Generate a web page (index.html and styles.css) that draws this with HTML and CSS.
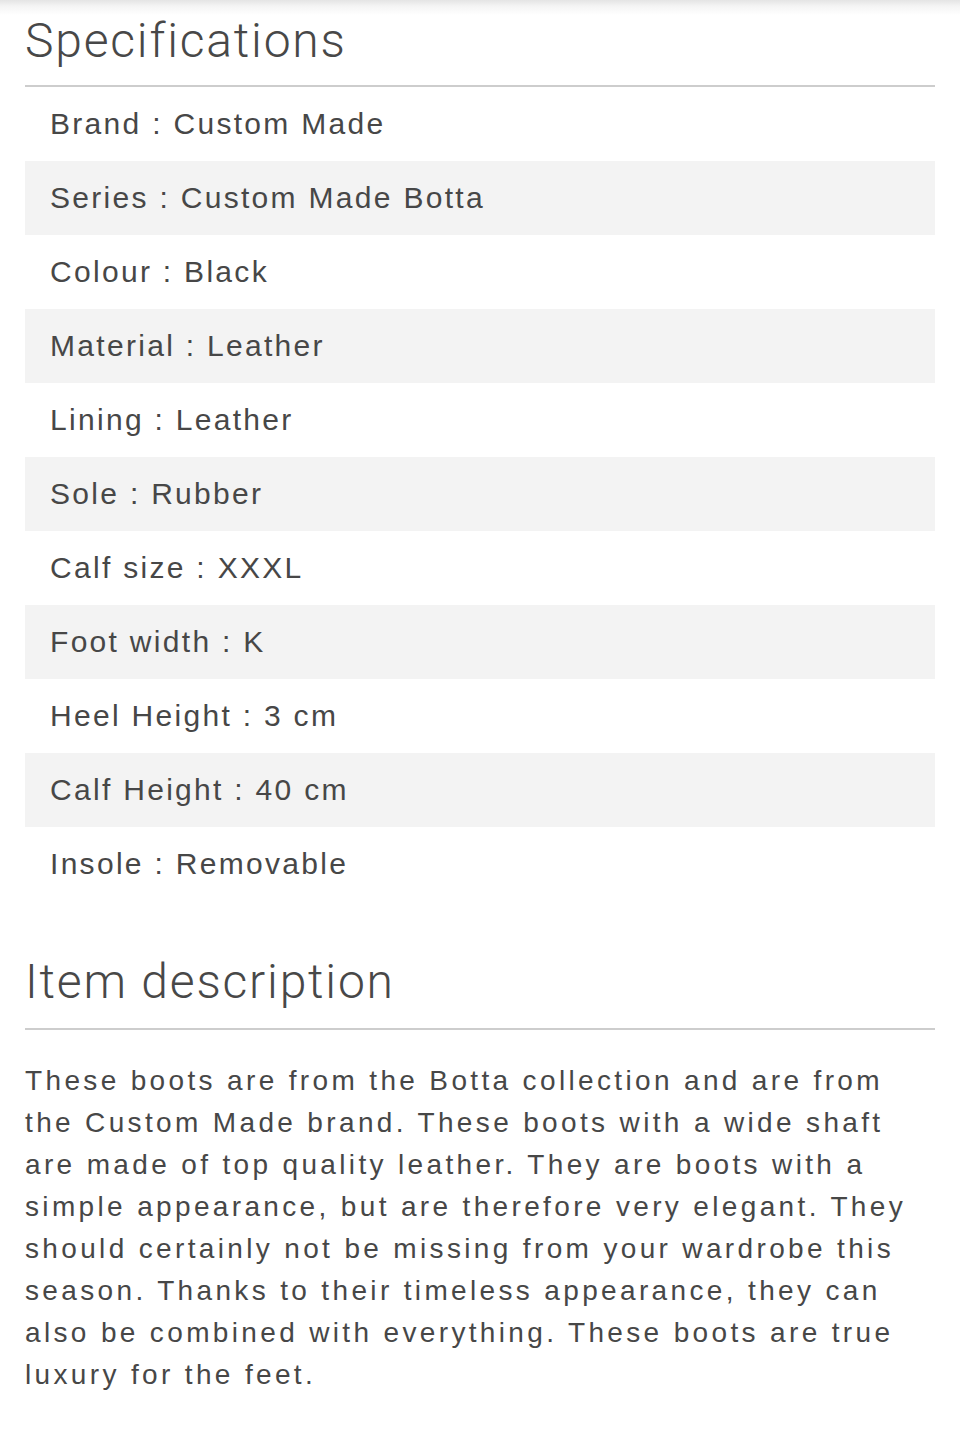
FILE: index.html
```html
<!DOCTYPE html>
<html lang="en">
<head>
<meta charset="utf-8">
<title>Specifications</title>
<link rel="stylesheet" href="styles.css">
</head>
<body>
<main class="page">
  <section class="specs">
    <h2 class="section-title">Specifications</h2>
    <ul class="spec-list">
      <li class="spec-row">Brand : Custom Made</li>
      <li class="spec-row">Series : Custom Made Botta</li>
      <li class="spec-row">Colour : Black</li>
      <li class="spec-row">Material : Leather</li>
      <li class="spec-row">Lining : Leather</li>
      <li class="spec-row">Sole : Rubber</li>
      <li class="spec-row">Calf size : XXXL</li>
      <li class="spec-row">Foot width : K</li>
      <li class="spec-row">Heel Height : 3 cm</li>
      <li class="spec-row">Calf Height : 40 cm</li>
      <li class="spec-row">Insole : Removable</li>
    </ul>
  </section>
  <section class="description">
    <h2 class="section-title section-title--second">Item description</h2>
    <p class="description-text">These boots are from the Botta collection and are from the Custom Made brand. These boots with a wide shaft are made of top quality leather. They are boots with a simple appearance, but are therefore very elegant. They should certainly not be missing from your wardrobe this season. Thanks to their timeless appearance, they can also be combined with everything. These boots are true luxury for the feet.</p>
  </section>
</main>
</body>
</html>
```

FILE: styles.css
```css
html, body {
  margin: 0;
  padding: 0;
}

body {
  background: #ffffff linear-gradient(to bottom, #e4e4e4 0px, #f4f4f4 6px, #ffffff 15px) no-repeat;
  background-size: 100% 15px;
  color: #474747;
  font-family: "Liberation Sans", Arial, sans-serif;
  width: 960px;
  min-height: 1445px;
}

.page {
  padding: 0 25px;
}

.section-title {
  margin: 0;
  padding: 13px 0 16px;
  border-bottom: 2px solid #cdcdcd;
  font-family: Roboto, "Liberation Sans", sans-serif;
  font-weight: 300;
  font-size: 48px;
  line-height: 56px;
  letter-spacing: 1.8px;
  color: #484848;
}

.section-title--second {
  margin-top: 53px;
  padding-top: 0;
  padding-bottom: 18px;
}

.spec-list {
  list-style: none;
  margin: 0;
  padding: 0;
}

.spec-row {
  height: 74px;
  line-height: 74px;
  padding-left: 25px;
  font-size: 30px;
  letter-spacing: 2.3px;
}

.spec-row:nth-child(even) {
  background: #f3f3f3;
}

.description-text {
  margin: 30px 0 0;
  font-size: 28px;
  line-height: 42px;
  letter-spacing: 3.35px;
}
```
